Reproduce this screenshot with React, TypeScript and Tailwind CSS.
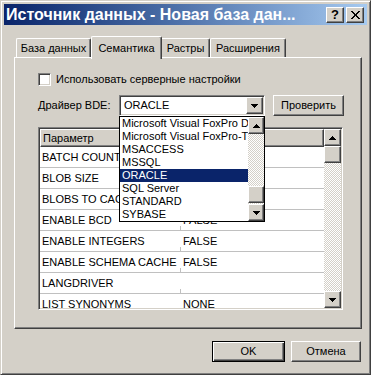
import React from "react";

const raised =
  "bg-[#d4d0c8] border border-t-white border-l-white border-r-[#404040] border-b-[#404040] shadow-[inset_-1px_-1px_0_#808080]";
const sunken =
  "border border-t-[#808080] border-l-[#808080] border-r-white border-b-white shadow-[inset_1px_1px_0_#404040,inset_-1px_-1px_0_#d4d0c8]";
const checker =
  "bg-[image:repeating-conic-gradient(#ffffff_0%_25%,#d4d0c8_0%_50%)] bg-[length:2px_2px]";

function Arrow({ dir }: { dir: "up" | "down" }) {
  const rows = dir === "down" ? [0, 1, 2, 3] : [3, 2, 1, 0];
  return (
    <svg width="7" height="4" viewBox="0 0 7 4" shapeRendering="crispEdges">
      {rows.map((r, i) => (
        <rect key={i} x={r} y={i} width={7 - 2 * r} height={1} fill="#000" />
      ))}
    </svg>
  );
}

function ScrollBtn({ dir }: { dir: "up" | "down" }) {
  return (
    <div className={`${raised} h-[17px] w-full flex items-center justify-center shrink-0`}>
      <Arrow dir={dir} />
    </div>
  );
}

const rows: [string, string][] = [
  ["BATCH COUNT", ""],
  ["BLOB SIZE", ""],
  ["BLOBS TO CACHE", ""],
  ["ENABLE BCD", "FALSE"],
  ["ENABLE INTEGERS", "FALSE"],
  ["ENABLE SCHEMA CACHE", "FALSE"],
  ["LANGDRIVER", ""],
  ["LIST SYNONYMS", "NONE"],
];

const drivers = [
  "Microsoft Visual FoxPro Driver",
  "Microsoft Visual FoxPro-Treiber",
  "MSACCESS",
  "MSSQL",
  "ORACLE",
  "SQL Server",
  "STANDARD",
  "SYBASE",
];

export default function App() {
  return (
    <div className="w-[371px] h-[375px] bg-[#d4d0c8] border border-t-[#d4d0c8] border-l-[#d4d0c8] border-r-[#404040] border-b-[#404040] shadow-[inset_1px_1px_0_#ffffff,inset_-1px_-1px_0_#808080] p-[3px] flex flex-col text-[11px] leading-none text-black font-['Liberation_Sans',Arial,sans-serif] overflow-hidden">
      {/* Title bar */}
      <div className="h-[21px] shrink-0 flex items-center bg-gradient-to-r from-[#0a246a] to-[#a6caf0] pl-[2px] pr-[3px] gap-[2px]">
        <div className="flex-1 text-white font-bold text-[16px] whitespace-nowrap overflow-hidden">
          Источник данных - Новая база дан...
        </div>
        <div className={`${raised} w-[18px] h-[16px] flex items-center justify-center font-bold text-[13px]`}>?</div>
        <div className={`${raised} w-[18px] h-[16px] flex items-center justify-center`}>
          <svg width="9" height="8" viewBox="0 0 9 8" shapeRendering="crispEdges">
            <path d="M0 0h2l2.5 3 2.5-3h2l-3.5 4 3.5 4h-2l-2.5-3-2.5 3h-2l3.5-4z" fill="#000" />
          </svg>
        </div>
      </div>

      {/* Body */}
      <div className="flex-1 flex flex-col pl-[10px] pr-[5px] pt-[11px]">
        {/* Tabs */}
        <div className="flex items-end h-[21px] ml-[2px] shrink-0">
          <div className="h-[19px] w-[75px] flex items-center justify-center border-t border-l border-t-white border-l-white border-r border-r-[#404040] shadow-[inset_-1px_0_0_#808080] rounded-tl-[2px] rounded-tr-[2px]">
            База данных
          </div>
          <div className="relative z-10 h-[23px] -mb-[2px] w-[71px] bg-[#d4d0c8] flex items-start pt-[6px] justify-center border-t border-l border-t-white border-l-white border-r border-r-[#404040] shadow-[inset_-1px_0_0_#808080] rounded-tl-[2px] rounded-tr-[2px]">
            Семантика
          </div>
          <div className="h-[19px] w-[48px] flex items-center justify-center border-t border-t-white border-r border-r-[#404040] shadow-[inset_-1px_0_0_#808080] rounded-tr-[2px]">
            Растры
          </div>
          <div className="h-[19px] w-[76px] flex items-center justify-center border-t border-l border-t-white border-l-white border-r border-r-[#404040] shadow-[inset_-1px_0_0_#808080] rounded-tl-[2px] rounded-tr-[2px]">
            Расширения
          </div>
        </div>

        {/* Panel */}
        <div className="h-[272px] shrink-0 border border-t-white border-l-white border-r-[#404040] border-b-[#404040] shadow-[inset_-1px_-1px_0_#808080] pl-[23px] pt-[15px] flex flex-col">
          {/* Checkbox */}
          <div className="flex items-center gap-[5px] h-[13px]">
            <div className={`${sunken} w-[13px] h-[13px] bg-white`} />
            <span>Использовать серверные настройки</span>
          </div>

          {/* Driver row */}
          <div className="flex items-center mt-[9px]">
            <span className="w-[81px]">Драйвер BDE:</span>
            <div className="relative">
              <div className={`${sunken} w-[146px] h-[21px] bg-white flex items-center p-[1px]`}>
                <span className="flex-1 pl-[3px]">ORACLE</span>
                <div className={`${raised} w-[17px] h-full flex items-center justify-center`}>
                  <Arrow dir="down" />
                </div>
              </div>
              {/* Dropdown list */}
              <div className="absolute left-0 top-[21px] z-20 w-[146px] h-[106px] bg-white border border-black flex">
                <div className="flex-1 flex flex-col overflow-hidden">
                  {drivers.map((d) => (
                    <div
                      key={d}
                      className={`h-[13px] leading-[13px] pl-[2px] whitespace-nowrap overflow-hidden ${
                        d === "ORACLE" ? "bg-[#0a246a] text-white" : ""
                      }`}
                    >
                      {d}
                    </div>
                  ))}
                </div>
                <div className="w-[16px] flex flex-col">
                  <ScrollBtn dir="up" />
                  <div className={`${checker} h-[52px]`} />
                  <div className={`${raised} h-[17px]`} />
                  <div className={`${checker} flex-1`} />
                  <ScrollBtn dir="down" />
                </div>
              </div>
            </div>
            <div className={`${raised} ml-[8px] w-[71px] h-[21px] flex items-center justify-center`}>
              Проверить
            </div>
          </div>

          {/* Grid */}
          <div className={`${sunken} mt-[11px] w-[305px] h-[183px] bg-white p-[1px] flex overflow-hidden`}>
            <div className="w-[284px] flex flex-col overflow-hidden">
              <div className="h-[18px] flex shrink-0">
                <div className={`${raised} w-[140px] flex items-center pl-[2px]`}>Параметр</div>
                <div className={`${raised} w-[144px]`} />
              </div>
              {rows.map(([k, v]) => (
                <div key={k} className="h-[21px] shrink-0 flex border-b border-b-[#c0c0c0]">
                  <div className="w-[140px] flex items-center pl-[2px] whitespace-nowrap overflow-hidden">{k}</div>
                  <div className="relative w-[144px] flex items-center pl-[3px]">
                    <span className="absolute left-0 bottom-0 w-px h-[4px] bg-[#c0c0c0]" />
                    {v}
                  </div>
                </div>
              ))}
            </div>
            <div className="w-[17px] flex flex-col">
              <ScrollBtn dir="up" />
              <div className={`${raised} h-[17px] shrink-0`} />
              <div className={`${checker} flex-1`} />
              <ScrollBtn dir="down" />
            </div>
          </div>
        </div>

        {/* Buttons */}
        <div className="flex justify-end gap-[6px] mt-[12px] mr-[1px]">
          <div className="w-[73px] h-[21px] border border-black bg-[#d4d0c8] shadow-[inset_1px_1px_0_#ffffff,inset_-1px_-1px_0_#404040,inset_-2px_-2px_0_#808080] flex items-center justify-center">
            OK
          </div>
          <div className={`${raised} w-[70px] h-[21px] flex items-center justify-center`}>Отмена</div>
        </div>
      </div>
    </div>
  );
}
